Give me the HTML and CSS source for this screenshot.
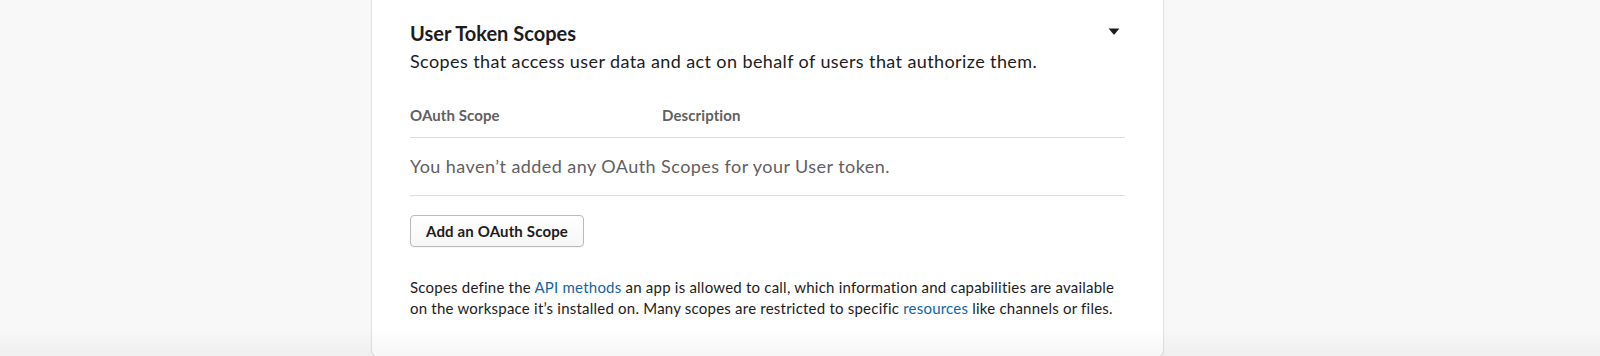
FILE: index.html
```html
<!DOCTYPE html>
<html lang="en">
<head>
<meta charset="utf-8">
<title>User Token Scopes</title>
<link rel="stylesheet" href="styles.css">
</head>
<body>
<div class="page">
  <section class="card">
    <div class="card-head">
      <h2 class="title">User Token Scopes</h2>
      <button class="caret" aria-label="Collapse">
        <svg width="12" height="7" viewBox="0 0 12 7"><path d="M0.6 0.5 H11.4 L6.6 6.2 Q6 6.9 5.4 6.2 Z" fill="#1d1c1d"/></svg>
      </button>
    </div>
    <p class="subtitle">Scopes that access user data and act on behalf of users that authorize them.</p>
    <div class="table">
      <div class="thead">
        <span class="col-scope">OAuth Scope</span>
        <span class="col-desc">Description</span>
      </div>
      <div class="empty">You haven’t added any OAuth Scopes for your User token.</div>
    </div>
    <button class="btn">Add an OAuth Scope</button>
    <p class="note">Scopes define the <a href="#">API methods</a> an app is allowed to call, which information and capabilities are available on the workspace it’s installed on. Many scopes are restricted to specific <a href="#">resources</a> like channels or files.</p>
  </section>
</div>
<div class="fade"></div>
</body>
</html>
```

FILE: styles.css
```css
html, body {
  margin: 0;
  padding: 0;
  height: 100%;
  overflow: hidden;
}
body {
  background: #f8f8f8;
  font-family: Lato, "Noto Sans", sans-serif;
  color: #1d1c1d;
}
.page {
  display: flex;
  justify-content: center;
  padding-right: 65px;
}
.card {
  box-sizing: border-box;
  width: 793px;
  background: #fff;
  border: 1px solid #e2e2e2;
  border-top: none;
  border-radius: 0 0 8px 8px;
  box-shadow: 0 0 2px rgba(0, 0, 0, 0.06);
  padding: 19px 38px 38px;
}
.card-head {
  display: flex;
  align-items: flex-start;
}
.title {
  flex: 1;
  margin: 0;
  font-size: 20px;
  line-height: 28px;
  font-weight: 700;
}
.caret {
  border: none;
  background: none;
  padding: 0;
  margin: 9px 5px 0 0;
  width: 12px;
  height: 7px;
  display: flex;
}
.subtitle {
  margin: 1px 0 0;
  font-size: 18px;
  line-height: 26px;
  letter-spacing: 0.4px;
}
.thead {
  display: flex;
  margin-top: 30px;
  padding-bottom: 11px;
  border-bottom: 1px solid #dddddd;
  font-size: 15px;
  line-height: 22px;
  font-weight: 700;
  color: #616061;
  letter-spacing: 0.1px;
}
.col-scope {
  width: 252px;
}
.empty {
  padding: 16px 0;
  font-size: 18px;
  line-height: 25px;
  color: #616061;
  letter-spacing: 0.44px;
  border-bottom: 1px solid #dddddd;
}
.btn {
  margin-top: 19px;
  height: 32px;
  padding: 0 15px;
  border: 1px solid #bbbabb;
  border-radius: 4px;
  background: linear-gradient(#ffffff, #f6f6f6);
  font-family: Lato, "Noto Sans", sans-serif;
  font-size: 15px;
  font-weight: 700;
  color: #1d1c1d;
  letter-spacing: 0.15px;
  box-shadow: 0 1px 1px rgba(0, 0, 0, 0.04);
}
.note {
  margin: 30px 0 0;
  font-size: 15px;
  line-height: 21px;
  letter-spacing: 0.22px;
}
.note a {
  color: #1264a3;
  text-decoration: none;
}
.fade {
  position: fixed;
  left: 0;
  right: 0;
  bottom: 0;
  height: 28px;
  background: linear-gradient(rgba(0, 0, 0, 0), rgba(0, 0, 0, 0.035));
  pointer-events: none;
}
```
